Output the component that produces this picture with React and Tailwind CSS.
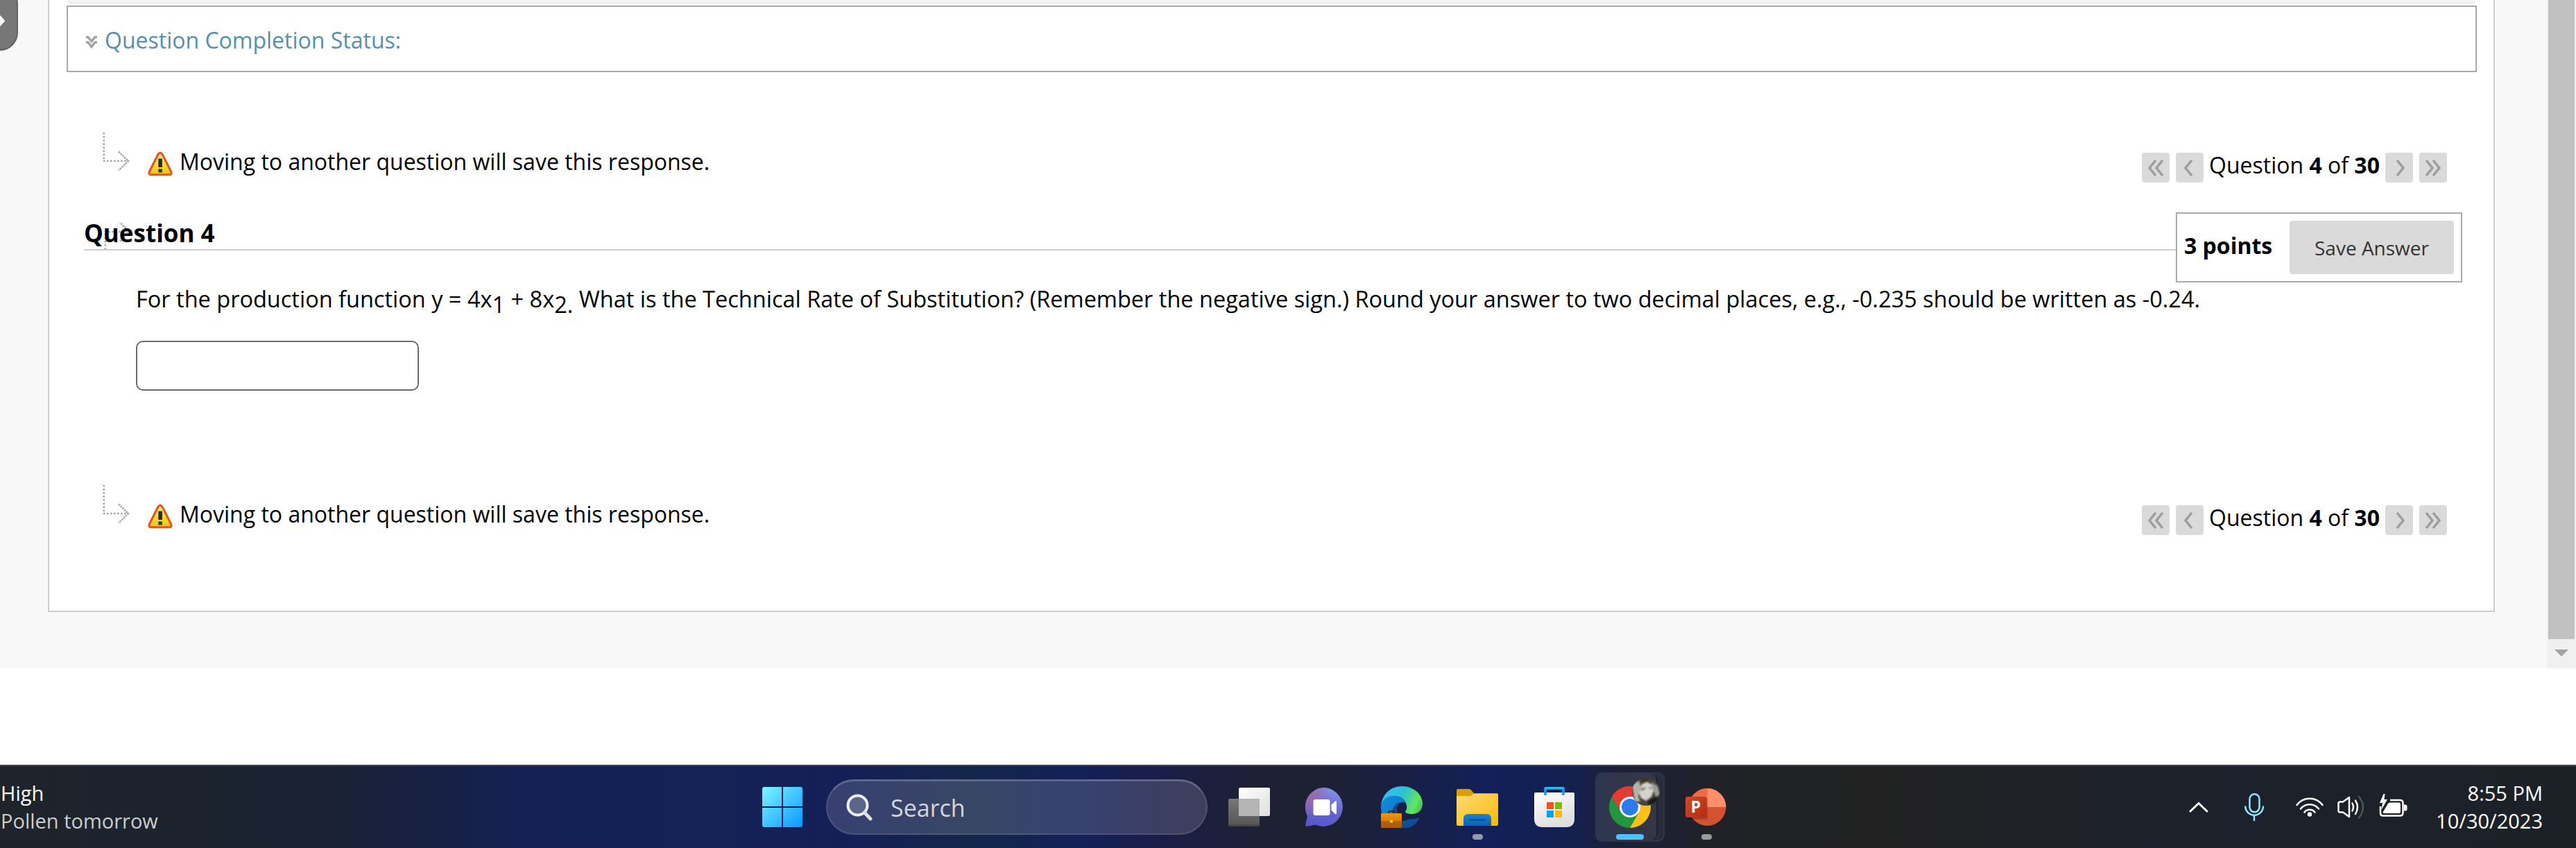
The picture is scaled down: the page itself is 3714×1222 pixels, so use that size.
const DottedArrow = () => (
  <svg width="40" height="58" viewBox="0 0 40 58" fill="none" stroke="#a6a6a6" strokeWidth="2.6">
    <path d="M1.8 0V42" strokeDasharray="2.6 2.5" />
    <path d="M1 41H37" strokeDasharray="2.6 2.4" />
    <path d="M23 27.5L37 41L23 54.5" strokeDasharray="2.6 1.2" />
  </svg>
);

const WarningIcon = () => (
  <svg width="36" height="36" viewBox="0 0 36 36">
    <defs>
      <linearGradient id="warn" x1="0" y1="0" x2="0" y2="1">
        <stop offset="0" stopColor="#fdf39a" />
        <stop offset="0.5" stopColor="#f6dc42" />
        <stop offset="1" stopColor="#eec412" />
      </linearGradient>
    </defs>
    <path
      d="M18 2.2C19.8 2.2 20.7 3.6 21.5 5.2L33.5 29C34.8 32 34 33.8 31.5 33.8H4.5C2 33.8 1.2 32 2.5 29L14.5 5.2C15.3 3.6 16.2 2.2 18 2.2Z"
      fill="url(#warn)"
      stroke="#e2551c"
      strokeWidth="3"
    />
    <rect x="15.3" y="10.5" width="5.6" height="12.5" fill="#2d2d2d" />
    <rect x="15.3" y="25.5" width="5.6" height="5" fill="#3b3b35" />
  </svg>
);

const NavButton = ({ double, flip }) => (
  <button className="flex h-[43px] w-10 items-center justify-center rounded-[4px] bg-[#dadada]">
    <svg
      width="24"
      height="24"
      viewBox="0 0 24 24"
      fill="none"
      stroke="#9c9c9c"
      strokeWidth="3.4"
      className={flip ? "rotate-180" : ""}
    >
      {double ? (
        <path d="M12 1L3 12L12 23M22 1L13 12L22 23" />
      ) : (
        <path d="M15 1L6 12L15 23" />
      )}
    </svg>
  </button>
);

const QuestionNav = () => (
  <div className="flex h-[72px] items-start pl-[77px] pr-[67px]">
    <DottedArrow />
    <div className="ml-[25px] mt-[27px]">
      <WarningIcon />
    </div>
    <p className="ml-[10px] mt-[22px] text-[32px] leading-10">
      Moving to another question will save this response.
    </p>
    <div className="ml-auto mt-[29px] flex">
      <NavButton double />
      <div className="ml-[9px]">
        <NavButton />
      </div>
      <p className="-mt-[2px] w-[262px] whitespace-nowrap pl-[8px] text-[32px] leading-10">
        Question <b>4</b> of <b>30</b>
      </p>
      <NavButton flip />
      <div className="ml-[9px]">
        <NavButton double flip />
      </div>
    </div>
  </div>
);

const QuestionHeader = () => (
  <div className="mt-[43px] flex h-[101px] items-start pl-[50px] pr-[45px]">
    <div className="relative h-[55px] flex-1 border-b-2 border-[#ccc]">
      {/* tail end of the connector, sits behind the title */}
      <div className="absolute left-[29px] top-[11px] h-[42px] overflow-hidden">
        <div className="-scale-y-100">
          <DottedArrow />
        </div>
      </div>
      <h3 className="relative pt-[10px] text-[35px] font-bold leading-10">Question 4</h3>
    </div>
    <div className="flex h-[101px] w-[413px] items-start justify-between border-2 border-[#aaa] bg-white pl-[10px] pr-[10px] pt-[10px]">
      <p className="mt-[16px] text-[32px] font-bold leading-10">3 points</p>
      <button className="h-[77px] w-[237px] rounded-[4px] bg-[#dadada] text-[28px] text-[#333]">
        Save Answer
      </button>
    </div>
  </div>
);

const ContentPanel = () => (
  <div className="ml-[69px] h-[882px] w-[3528px] overflow-hidden border-x-2 border-b-2 border-[#ccc] bg-white">
    <div className="mx-[25px] h-[5px] rounded-b-[8px] border-b-2 border-[#ececec] bg-[#f5f5f5]" />
    <div className="ml-[25px] mt-[3px] flex h-24 w-[3475px] items-center border-2 border-[#aaa] pl-[25px]">
      <svg
        width="18"
        height="20"
        viewBox="0 0 18 20"
        fill="none"
        stroke="#a3a3a3"
        strokeWidth="3.4"
        className="mt-[10px]"
      >
        <path d="M1 2.5H4L9 8.5L14 2.5H17M1 10H4L9 16.5L14 10H17" />
      </svg>
      <a className="ml-[10px] mt-[4px] text-[32px] leading-10 text-[#5690ac]">
        Question Completion Status:
      </a>
    </div>
    <div className="mt-[87px]">
      <QuestionNav />
    </div>
    <QuestionHeader />
    <div className="h-[292px] pl-[125px] pt-[4px]">
      <p className="h-[80px] whitespace-nowrap text-[32.5px] leading-10">
        For the production function y = 4x<span className="relative top-[8px]">1</span> + 8x
        <span className="relative top-[8px]">2.</span> What is the Technical Rate of Substitution?
        (Remember the negative sign.) Round your answer to two decimal places, e.g., -0.235 should
        be written as -0.24.
      </p>
      <input className="block h-[72px] w-[408px] rounded-[10px] border-2 border-[#6b6b6b] bg-white" />
    </div>
    <QuestionNav />
  </div>
);

const Scrollbar = () => (
  <div className="flex h-[963px] w-[42px] flex-col items-center bg-[#f0f0f0]">
    <div className="h-[921px] w-[38px] bg-[#c1c1c1]" />
    <svg width="20" height="10" viewBox="0 0 20 10" className="mt-[15px]">
      <path d="M0 0H20L10 10Z" fill="#a3a3a3" />
    </svg>
  </div>
);

const StartIcon = () => (
  <svg width="58" height="58" viewBox="0 0 58 58">
    <defs>
      <linearGradient id="win" x1="0" y1="0" x2="58" y2="58" gradientUnits="userSpaceOnUse">
        <stop offset="0" stopColor="#7df5ff" />
        <stop offset="1" stopColor="#0a96ff" />
      </linearGradient>
    </defs>
    <g fill="url(#win)">
      <path d="M3 0H28V28H0V3Q0 0 3 0Z" />
      <path d="M30 0H55Q58 0 58 3V28H30Z" />
      <path d="M0 30H28V58H3Q0 58 0 55Z" />
      <path d="M30 30H58V55Q58 58 55 58H30Z" />
    </g>
  </svg>
);

const SearchBox = () => (
  <div className="ml-[34px] flex h-20 w-[550px] items-center rounded-full border-2 border-t-[3px] border-white/10 border-t-white/20 bg-white/15 pl-[27px]">
    <svg width="38" height="39" viewBox="0 0 38 39" fill="none">
      <circle cx="16.5" cy="16.5" r="14" fill="#ffffff30" stroke="#eef0f3" strokeWidth="4" />
      <path d="M26.5 27L35 36" stroke="#dcdfe5" strokeWidth="5" strokeLinecap="round" />
    </svg>
    <span className="ml-[26px] text-[34px] leading-10 text-[#d3d6dd]">Search</span>
  </div>
);

const TaskViewIcon = () => (
  <svg width="60" height="56" viewBox="0 0 60 56">
    <defs>
      <linearGradient id="tv1" x1="0" y1="0" x2="1" y2="1">
        <stop offset="0" stopColor="#fff" />
        <stop offset="1" stopColor="#dedede" />
      </linearGradient>
      <linearGradient id="tv2" x1="0" y1="0" x2="0" y2="1">
        <stop offset="0" stopColor="#777" />
        <stop offset="1" stopColor="#555" />
      </linearGradient>
    </defs>
    <rect y="16" width="45" height="40" rx="2" fill="url(#tv2)" />
    <rect y="53.5" width="45" height="2.5" rx="1" fill="#444" />
    <rect x="15" width="45" height="41" rx="2" fill="url(#tv1)" />
    <rect x="15" y="16" width="30" height="25" fill="#b4b4b4" />
  </svg>
);

const bubble =
  "M28 0A28 28 0 1 1 14.5 53.5L2 56Q-0.5 56 0.3 53L3 41A28 28 0 0 1 28 0Z";

const ChatIcon = () => (
  <svg width="56" height="56" viewBox="0 0 56 56">
    <defs>
      <linearGradient id="chat" x1="0.7" y1="0" x2="0.45" y2="1">
        <stop offset="0" stopColor="#8493e8" />
        <stop offset="0.6" stopColor="#6763cc" />
        <stop offset="1" stopColor="#5558cc" />
      </linearGradient>
      <radialGradient id="chatPink" cx="0.1" cy="0.2" r="0.6">
        <stop offset="0" stopColor="#a067a4" />
        <stop offset="1" stopColor="#a067a4" stopOpacity="0" />
      </radialGradient>
    </defs>
    <path d={bubble} fill="url(#chat)" />
    <path d={bubble} fill="url(#chatPink)" />
    <rect x="11.5" y="17" width="24" height="23" rx="3" fill="#fff" />
    <path d="M37.5 25L43 19.5Q45 18.5 45 20.5V37Q45 39 43 38L37.5 32.5Z" fill="#fff" />
  </svg>
);

const EdgeIcon = () => (
  <svg width="60" height="60" viewBox="0 0 60 60">
    <defs>
      <linearGradient id="edgeTop" x1="0" y1="0.3" x2="1" y2="0.6">
        <stop offset="0" stopColor="#3cb8fb" />
        <stop offset="0.5" stopColor="#2cc3cf" />
        <stop offset="0.85" stopColor="#62e65c" />
        <stop offset="1" stopColor="#4cc95e" />
      </linearGradient>
      <linearGradient id="edgeBody" x1="0" y1="0" x2="1" y2="1">
        <stop offset="0" stopColor="#1090df" />
        <stop offset="1" stopColor="#0b6bc4" />
      </linearGradient>
      <linearGradient id="edgeCase" x1="0" y1="0" x2="0" y2="1">
        <stop offset="0" stopColor="#ee9612" />
        <stop offset="0.5" stopColor="#d97f06" />
        <stop offset="0.55" stopColor="#b86400" />
        <stop offset="1" stopColor="#a85b00" />
      </linearGradient>
    </defs>
    <path
      d="M17 34C17 46 26 55 38 48C46 48 52 47 55.5 44.5C50 61 34 62 24 59C14 56 15 44 17 34Z"
      fill="#0f4f97"
    />
    <path
      d="M0 30C0 19 8 14 18 14C28 14 35 20 36 24C28 20 22 28 22.5 34C23 40 26 45 30 48V60C12 60 0 48 0 30Z"
      fill="url(#edgeBody)"
    />
    <path d="M16 40C16 30 22 22 31 23C24 24 21 31 23 37L28 46L20 44Z" fill="#104a8c" />
    <path
      d="M0 28C2 11 14 0 30 0C48 0 60 12 60 25C60 35 53 40 45 40C39 40 34.5 38.5 35 36.5C37 34 37.5 32 37.2 29C36.5 19 28 14 18.5 14C9 14 2 19 0 28Z"
      fill="url(#edgeTop)"
    />
    <path
      d="M11 39V37.5Q11 36 13 36H17Q19 36 19 37.5V39"
      stroke="#2a2a33"
      strokeWidth="2"
      fill="none"
    />
    <rect y="39" width="30" height="21" rx="1" fill="url(#edgeCase)" />
    <rect x="13" y="49" width="4" height="3.5" fill="#ffd23b" />
  </svg>
);

const ExplorerIcon = () => (
  <svg width="60" height="53" viewBox="0 0 60 53">
    <defs>
      <linearGradient id="folder" x1="0" y1="0" x2="1" y2="1">
        <stop offset="0" stopColor="#ffdb72" />
        <stop offset="1" stopColor="#f9b70d" />
      </linearGradient>
      <linearGradient id="folderBlue" x1="0" y1="0" x2="0" y2="1">
        <stop offset="0" stopColor="#1683d0" />
        <stop offset="1" stopColor="#0c62b8" />
      </linearGradient>
    </defs>
    <path d="M0 2Q0 0 2 0H18Q20 0 21.5 2L25 6H58Q60 6 60 8V20H0Z" fill="#dd9d05" />
    <path
      d="M0 10H19Q21 10 22.5 8.5L24 7H59Q60 7 60 8V51Q60 53 58 53H2Q0 53 0 51Z"
      fill="url(#folder)"
    />
    <path d="M10 53V43Q10 36 17 36H43Q50 36 50 43V53Z" fill="url(#folderBlue)" />
    <path d="M18 44.5H42" stroke="#0a4a8a" strokeWidth="2" />
  </svg>
);

const StoreIcon = () => (
  <svg width="58" height="58" viewBox="0 0 58 58">
    <defs>
      <linearGradient id="store" x1="0" y1="0" x2="0.5" y2="1">
        <stop offset="0" stopColor="#fff" />
        <stop offset="1" stopColor="#dedede" />
      </linearGradient>
      <linearGradient id="handle" x1="0" y1="0" x2="0" y2="1">
        <stop offset="0" stopColor="#34c8ff" />
        <stop offset="0.4" stopColor="#1486de" />
        <stop offset="1" stopColor="#1fb4ee" />
      </linearGradient>
    </defs>
    <path d="M0 10Q0 8 2 8H56Q58 8 58 10V46Q58 58 46 58H12Q0 58 0 46Z" fill="url(#store)" />
    <path d="M14 12V3Q14 0 17 0H41Q44 0 44 3V12H40V4H18V12Z" fill="url(#handle)" />
    <rect x="18" y="22" width="10" height="10" fill="#f25022" />
    <rect x="30" y="22" width="10" height="10" fill="#7fba00" />
    <rect x="18" y="34" width="10" height="10" fill="#00a4ef" />
    <rect x="30" y="34" width="10" height="10" fill="#ffb900" />
  </svg>
);

const ChromeIcon = () => (
  <svg width="60" height="60" viewBox="0 0 60 60">
    <path d="M4 15A30 30 0 0 0 30 60L43 37.5L30 30L17 37.5Z" fill="#23953f" />
    <path d="M30 60A30 30 0 0 0 56 15H30V30L43 37.5Z" fill="#fcc016" />
    <path d="M4 15A30 30 0 0 1 56 15H30L17 37.5Z" fill="#e63b31" />
    <circle cx="30" cy="30" r="15" fill="#fff" />
    <circle cx="30" cy="30" r="12" fill="#2b7bef" />
  </svg>
);

const ProfileBadge = () => (
  <svg width="40" height="40" viewBox="0 0 40 40">
    <defs>
      <clipPath id="badge">
        <circle cx="20" cy="20" r="20" />
      </clipPath>
      <filter id="soft">
        <feGaussianBlur stdDeviation="1" />
      </filter>
    </defs>
    <g clipPath="url(#badge)">
      <rect width="40" height="40" fill="#45443f" />
      <g filter="url(#soft)">
        <path d="M0 10L10 4L13 14L9 26L12 34L4 34Z" fill="#b3b3ab" />
        <path d="M14 9L22 6L29 10L31 19L28 27L20 33L13 29L10 22Z" fill="#d3d3ca" />
        <path d="M28 6L37 12L40 24L34 27L31 18Z" fill="#9b9b94" />
        <path d="M12 0H26L22 5L13 7Z" fill="#3a3420" />
        <path d="M12 15L20 13L19 17L13 19ZM23 13L29 13L27 17Z" fill="#8a8a83" />
        <path d="M22 33L36 26L38 34L24 40Z" fill="#1c1c1c" />
      </g>
    </g>
  </svg>
);

const PowerPointIcon = () => (
  <svg width="59" height="54" viewBox="0 0 59 54">
    <defs>
      <linearGradient id="ppt" x1="0" y1="0" x2="1" y2="1">
        <stop offset="0" stopColor="#ca4c28" />
        <stop offset="1" stopColor="#b52b10" />
      </linearGradient>
    </defs>
    <circle cx="31.5" cy="27" r="27" fill="#d35230" />
    <path d="M31.5 0A27 27 0 0 0 4.5 27H31.5Z" fill="#ed6c47" />
    <path d="M31.5 0A27 27 0 0 1 58.5 27H31.5Z" fill="#ff8f6b" />
    <rect x="2" y="14" width="30" height="31" rx="3" fill="#00000030" />
    <rect y="12" width="30.5" height="30" rx="3" fill="url(#ppt)" />
    <text
      x="15"
      y="35"
      textAnchor="middle"
      fill="#fff"
      fontSize="23"
      fontWeight="700"
      fontFamily="Open Sans, sans-serif"
    >
      P
    </text>
  </svg>
);

const SystemTray = () => (
  <div className="ml-auto flex h-full items-center pr-[48px] text-white">
    <svg width="28" height="16" viewBox="0 0 28 16" fill="none" className="-mt-[1px]">
      <path d="M2 14L14 2.5L26 14" stroke="#fff" strokeWidth="3" strokeLinecap="round" />
    </svg>
    <svg
      width="28"
      height="40"
      viewBox="0 0 28 40"
      fill="none"
      stroke="#8fe4fb"
      strokeWidth="2.5"
      className="ml-[52px]"
    >
      <rect x="7.5" y="1.3" width="14" height="26" rx="7" />
      <path d="M1.3 18.5V20A12.9 12.9 0 0 0 27 20V18.5M14 33V40" />
    </svg>
    <svg
      width="40"
      height="30"
      viewBox="0 0 40 30"
      fill="none"
      stroke="#fff"
      strokeWidth="2.5"
      strokeLinecap="round"
      className="-mt-[1px] ml-[46px]"
    >
      <path d="M1.5 12A23 23 0 0 1 38.5 12M7 17.5A16.5 16.5 0 0 1 33 17.5M12.5 22.5A9.5 9.5 0 0 1 27.5 22.5" />
      <circle cx="20" cy="25.5" r="3.2" fill="#fff" stroke="none" />
    </svg>
    <svg
      width="40"
      height="34"
      viewBox="0 0 40 34"
      fill="none"
      stroke="#fff"
      strokeWidth="2.5"
      strokeLinecap="round"
      strokeLinejoin="round"
      className="ml-[20px]"
    >
      <path d="M1.5 12Q1.5 9.5 4 9.5H8L17 3V31L8 24.5H4Q1.5 24.5 1.5 22Z" />
      <path d="M21.5 11.5Q24.5 17 21.5 22.5M26 7.5Q32 17 26 27" />
      <path d="M31 2Q43 17 31 32.5" stroke="#50545c" />
    </svg>
    <svg width="42" height="34" viewBox="0 0 42 34" fill="none" className="-mt-[4px] ml-[20px]">
      <path
        d="M16 9H30Q34.5 9 34.5 13V27.5Q34.5 31.5 30 31.5H6Q2 31.5 2 27.5V18"
        stroke="#fff"
        strokeWidth="2.5"
      />
      <path
        d="M13 14Q14 12.5 16 12.5H28.5Q31 12.5 31 15V25.5Q31 28 28.5 28H8Q5.5 28 5.5 26.5Z"
        fill="#fff"
      />
      <path d="M36 15.5H38Q40.5 15.5 40.5 18V22Q40.5 24.5 38 24.5H36Z" fill="#fff" />
      <path d="M6.5 0L1 13H5L3.5 23L12 8H7.5L8.5 0Z" fill="#fff" />
    </svg>
    <div className="ml-[38px] w-[156px] whitespace-nowrap text-right text-[29px] leading-10">
      <p>8:55 PM</p>
      <p>10/30/2023</p>
    </div>
  </div>
);

const Taskbar = () => (
  <footer className="mt-[139px] flex h-[120px] items-center border-t-2 border-[#41444f] bg-[linear-gradient(to_right,#1f242b_0px,#1c232e_300px,#1a2236_500px,#152153_750px,#142256_1050px,#151f58_1200px,#14264a_1400px,#132158_1560px,#191d4b_1650px,#1b1f3c_1740px,#1e2130_1870px,#1a2040_2000px,#13205a_2140px,#132050_2260px,#1b2038_2330px,#202228_2470px,#222222_2700px,#1d212b_3100px,#1c2027_3714px)]">
    <div className="w-[1099px] whitespace-nowrap pl-[1px] text-[29px] leading-10">
      <p className="text-white">High</p>
      <p className="text-[#cbcccd]">Pollen tomorrow</p>
    </div>
    <StartIcon />
    <SearchBox />
    <div className="ml-[30px]">
      <TaskViewIcon />
    </div>
    <div className="ml-[51px]">
      <ChatIcon />
    </div>
    <div className="ml-[53px]">
      <EdgeIcon />
    </div>
    <div className="relative ml-[49px]">
      <ExplorerIcon />
      <span className="absolute left-[23px] top-[65px] h-2 w-[15px] rounded-full bg-[#9499ae]" />
    </div>
    <div className="ml-[52px]">
      <StoreIcon />
    </div>
    <div className="relative ml-[30px] h-[100px] w-[100px] overflow-hidden rounded-[10px] border-2 border-white/5 bg-white/5">
      <div className="h-full w-[88px] rounded-r-[10px] border-r-2 border-[#1e2130] bg-white/5 pl-[18px] pt-[18px]">
        <ChromeIcon />
      </div>
      <div className="absolute left-[51px] top-[6px]">
        <ProfileBadge />
      </div>
      <span className="absolute left-[28px] top-[87px] h-2 w-10 rounded-full bg-[#4cc2ff]" />
    </div>
    <div className="relative ml-[30px]">
      <PowerPointIcon />
      <span className="absolute left-[23px] top-[66px] h-2 w-[15px] rounded-full bg-[#9b9b9d]" />
    </div>
    <SystemTray />
  </footer>
);

const App = () => {
  return (
    <div className="h-[1222px] w-[3714px] overflow-hidden bg-white font-['Open_Sans',sans-serif] text-black [&_svg]:block [&_svg]:shrink-0">
      <div className="relative flex h-[963px]">
        <main className="h-[962px] flex-1 bg-[#f8f8f8]">
          <ContentPanel />
        </main>
        <Scrollbar />
        <button className="absolute left-[-30px] top-[-20px] flex h-[93px] w-[56px] items-center justify-end rounded-[26px] border-2 border-[#626262] bg-[#777]">
          <svg
            width="16"
            height="22"
            viewBox="0 0 16 22"
            fill="none"
            stroke="#fff"
            strokeWidth="5"
            className="mr-[16px] mt-[7px]"
          >
            <path d="M4 2L12 11L4 20" />
          </svg>
        </button>
      </div>
      <Taskbar />
    </div>
  );
};

export default App;
